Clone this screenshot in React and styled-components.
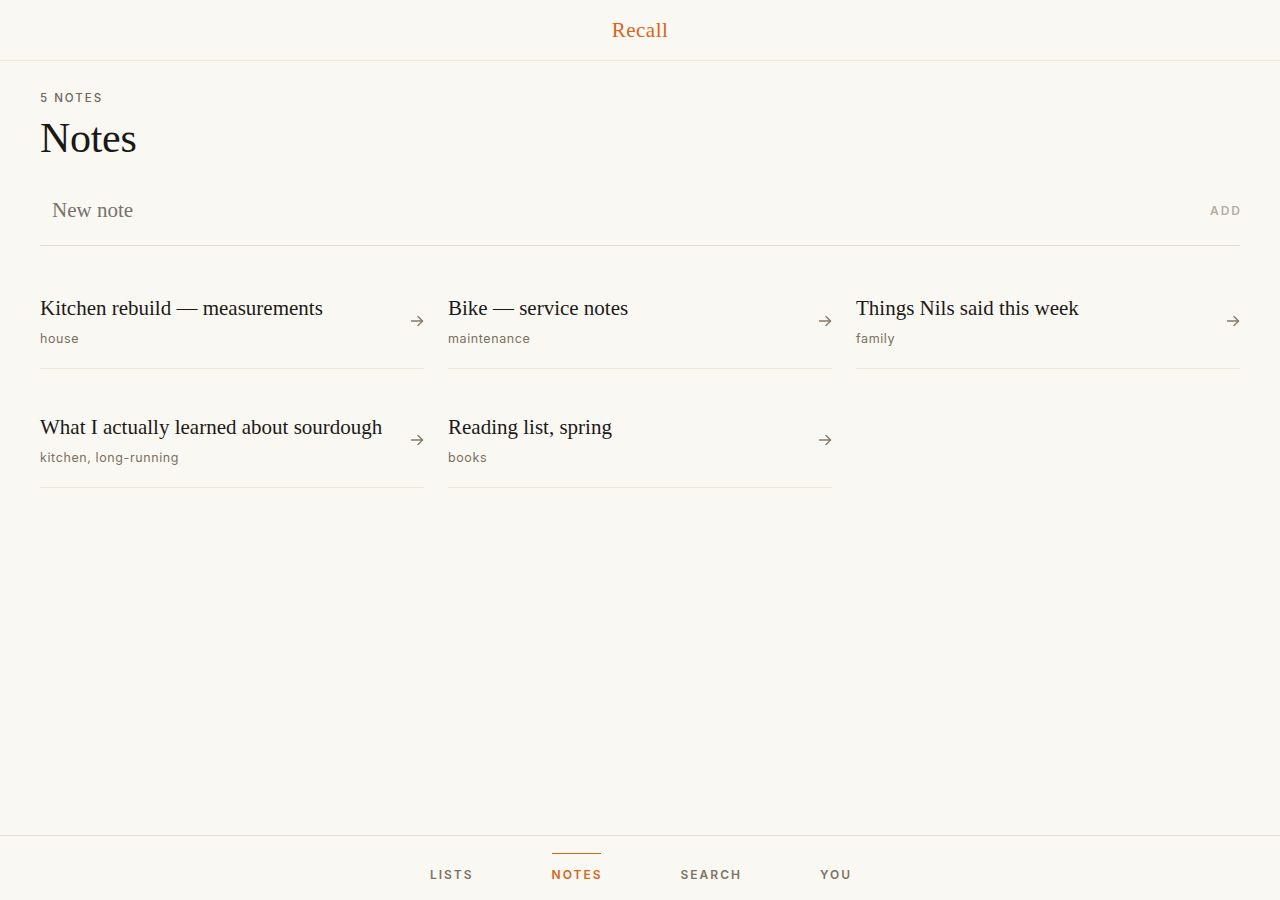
import React from "react";
import styled, { createGlobalStyle } from "styled-components";

const notes = [
  { title: "Kitchen rebuild — measurements", tags: "house" },
  { title: "Bike — service notes", tags: "maintenance" },
  { title: "Things Nils said this week", tags: "family" },
  { title: "What I actually learned about sourdough", tags: "kitchen, long-running" },
  { title: "Reading list, spring", tags: "books" },
];

const tabs = ["Lists", "Notes", "Search", "You"];

function Arrow() {
  return (
    <svg width="14" height="14" viewBox="0 0 14 14" fill="none" stroke="currentColor" strokeWidth="1.4" strokeLinecap="round" strokeLinejoin="round">
      <path d="M1.5 7h11" />
      <path d="M8 2.5 12.5 7 8 11.5" />
    </svg>
  );
}

export default function App() {
  return (
    <>
      <GlobalStyle />
      <Page>
        <Header>
          <Brand>Recall</Brand>
        </Header>
        <Main>
          <Count>5 Notes</Count>
          <Title>Notes</Title>
          <NewNote>
            <NoteInput placeholder="New note" />
            <AddButton>Add</AddButton>
          </NewNote>
          <Grid>
            {notes.map((n) => (
              <Card key={n.title}>
                <CardText>
                  <CardTitle>{n.title}</CardTitle>
                  <CardTags>{n.tags}</CardTags>
                </CardText>
                <CardArrow>
                  <Arrow />
                </CardArrow>
              </Card>
            ))}
          </Grid>
        </Main>
        <TabBar>
          {tabs.map((t) => (
            <Tab key={t} $active={t === "Notes"}>
              {t}
            </Tab>
          ))}
        </TabBar>
      </Page>
    </>
  );
}

const GlobalStyle = createGlobalStyle`
  html, body {
    margin: 0;
    padding: 0;
    background: #faf8f3;
  }
  * {
    box-sizing: border-box;
  }
`;

const Page = styled.div`
  height: 900px;
  display: flex;
  flex-direction: column;
  background: #faf8f3;
  color: #1c1a17;
  font-family: "Liberation Serif", "DejaVu Serif", serif;
`;

const Header = styled.header`
  height: 61px;
  display: flex;
  align-items: center;
  justify-content: center;
  border-bottom: 1px solid #ece4d4;
  flex-shrink: 0;
`;

const Brand = styled.div`
  color: #d9641a;
  font-size: 21px;
  letter-spacing: 0.5px;
`;

const Main = styled.main`
  flex: 1;
  padding: 30px 40px 0;
`;

const Count = styled.div`
  font-family: Inter, "Liberation Sans", sans-serif;
  font-size: 11.5px;
  font-weight: 500;
  letter-spacing: 2px;
  text-transform: uppercase;
  color: #6e665b;
  line-height: 14px;
`;

const Title = styled.h1`
  margin: 9px 0 0;
  font-size: 42px;
  font-weight: 400;
  line-height: 48px;
  letter-spacing: -0.3px;
  color: #1a1815;
`;

const NewNote = styled.div`
  margin-top: 24px;
  display: flex;
  align-items: center;
  height: 60px;
  padding: 0 0 10px 12px;
  border-bottom: 1px solid #e3dfd5;
`;

const NoteInput = styled.input`
  flex: 1;
  border: none;
  background: transparent;
  outline: none;
  font-family: "Liberation Serif", "DejaVu Serif", serif;
  font-size: 21px;
  color: #1c1a17;
  padding: 0;

  &::placeholder {
    color: #77736c;
  }
`;

const AddButton = styled.button`
  border: none;
  background: transparent;
  padding: 0;
  font-family: Inter, "Liberation Sans", sans-serif;
  font-size: 12px;
  font-weight: 600;
  letter-spacing: 2px;
  text-transform: uppercase;
  color: #b3aea5;
  cursor: pointer;
  margin-right: -2px;
`;

const Grid = styled.div`
  margin-top: 29px;
  display: grid;
  grid-template-columns: repeat(3, 1fr);
  column-gap: 24px;
  row-gap: 25px;
`;

const Card = styled.div`
  display: flex;
  align-items: center;
  justify-content: space-between;
  padding: 20px 0 20px;
  border-bottom: 1px solid #ece4d4;
  cursor: pointer;
`;

const CardText = styled.div`
  display: flex;
  flex-direction: column;
  gap: 9px;
`;

const CardTitle = styled.div`
  font-size: 21px;
  line-height: 26px;
  color: #1c1a17;
`;

const CardTags = styled.div`
  font-family: Inter, "Liberation Sans", sans-serif;
  font-size: 12.5px;
  line-height: 18px;
  letter-spacing: 0.6px;
  color: #7a6f60;
`;

const CardArrow = styled.div`
  display: flex;
  color: #85796a;
  margin-bottom: 2px;
`;

const TabBar = styled.nav`
  height: 65px;
  flex-shrink: 0;
  display: flex;
  justify-content: center;
  gap: 78px;
  border-top: 1px solid #e3dfd5;
  padding-left: 2px;
`;

const Tab = styled.button`
  position: relative;
  border: none;
  background: transparent;
  padding: 12px 0 0;
  height: 100%;
  font-family: Inter, "Liberation Sans", sans-serif;
  font-size: 12px;
  font-weight: 600;
  letter-spacing: 2px;
  text-transform: uppercase;
  color: ${(p) => (p.$active ? "#d9641a" : "#7d7265")};
  cursor: pointer;

  &::before {
    content: "";
    position: absolute;
    top: 17px;
    left: 0;
    right: 2px;
    height: 1px;
    background: #d9641a;
    display: ${(p) => (p.$active ? "block" : "none")};
  }
`;
